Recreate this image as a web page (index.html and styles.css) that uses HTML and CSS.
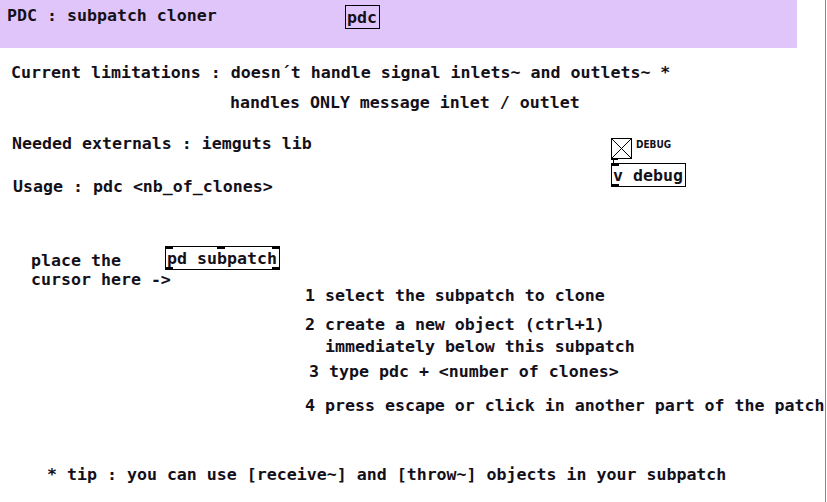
FILE: index.html
```html
<!DOCTYPE html>
<html>
<head>
<meta charset="utf-8">
<link rel="stylesheet" href="styles.css">
</head>
<body>
<div class="canvas">
  <div class="header"></div>
  <div class="c t-title">PDC : subpatch cloner</div>
  <div class="obj o-pdc">pdc</div>

  <div class="c t-lim">Current limitations : doesn´t handle signal inlets~ and outlets~ *</div>
  <div class="c t-lim2">handles ONLY message inlet / outlet</div>
  <div class="c t-need">Needed externals : iemguts lib</div>
  <div class="c t-usage">Usage : pdc &lt;nb_of_clones&gt;</div>

  <div class="toggle"><svg width="21" height="21" viewBox="0 0 21 21"><rect x="0.5" y="0.5" width="20" height="20" fill="#fff" stroke="#000"/><path d="M1 1L20 20M20 1L1 20" stroke="#000" stroke-width="1"/></svg><span class="tog-out"></span></div>
  <div class="tog-label">DEBUG</div>
  <div class="wire"></div>
  <div class="obj o-vdebug">v debug<span class="port p-tl"></span><span class="port p-bl"></span></div>

  <div class="c t-place">place the<br>cursor here -&gt;</div>
  <div class="obj o-sub">pd subpatch<span class="port p-tl"></span><span class="port p-tm"></span><span class="port p-tr"></span><span class="port p-bl"></span><span class="port p-br"></span></div>

  <div class="c t-s1">1 select the subpatch to clone</div>
  <div class="c t-s2">2 create a new object (ctrl+1)</div>
  <div class="c t-s2b">immediately below this subpatch</div>
  <div class="c t-s3">3 type pdc + &lt;number of clones&gt;</div>
  <div class="c t-s4">4 press escape or click in another part of the patch</div>

  <div class="c t-tip">* tip : you can use [receive~] and [throw~] objects in your subpatch</div>
</div>
</body>
</html>
```

FILE: styles.css
```css
html, body {
  margin: 0;
  padding: 0;
  background: #fff;
}
.canvas {
  position: relative;
  width: 825px;
  height: 502px;
  border-right: 1px solid #8a8a8a;
  background: #fff;
  overflow: hidden;
  font-family: "DejaVu Sans Mono", monospace;
  font-weight: bold;
  font-size: 16.6px;
  color: #14101a;
}
.header {
  position: absolute;
  left: 0;
  top: 0;
  width: 797px;
  height: 48px;
  background: #dfc5fa;
}
.c {
  position: absolute;
  line-height: 19px;
  white-space: pre;
}
.t-title { left: 7px; top: 6px; }
.t-lim { left: 11px; top: 63px; }
.t-lim2 { left: 230px; top: 93px; }
.t-need { left: 12px; top: 134px; }
.t-usage { left: 13px; top: 177px; }
.t-place { left: 31px; top: 251px; }
.t-s1 { left: 305px; top: 286px; }
.t-s2 { left: 305px; top: 315px; }
.t-s2b { left: 325px; top: 337px; }
.t-s3 { left: 309px; top: 362px; }
.t-s4 { left: 305px; top: 396px; }
.t-tip { left: 47px; top: 465px; }

.obj {
  position: absolute;
  border: 1px solid #000;
  line-height: 23px;
  height: 22px;
  padding: 0 2px 0 1px;
  white-space: pre;
  box-sizing: content-box;
}
.o-pdc { left: 345px; top: 5px; }
.o-sub { left: 165px; top: 246px; background: #fff; }
.o-vdebug { left: 611px; top: 163px; background: #fff; }
.port {
  position: absolute;
  width: 8px;
  height: 3px;
  background: #000;
}
.p-tl { left: -1px; top: -1px; }
.p-tm { left: 51px; top: -1px; }
.p-tr { right: -1px; top: -1px; }
.p-bl { left: -1px; bottom: -1px; }
.p-br { right: -1px; bottom: -1px; }

.toggle {
  position: absolute;
  left: 611px;
  top: 138px;
  width: 21px;
  height: 21px;
}
.toggle svg { display: block; }
.tog-out {
  position: absolute;
  left: 0;
  bottom: -1px;
  width: 7px;
  height: 2px;
  background: #000;
}
.tog-label {
  position: absolute;
  left: 636px;
  top: 139px;
  font-family: "DejaVu Sans Condensed", "DejaVu Sans", sans-serif;
  font-size: 10px;
  line-height: 12px;
  font-weight: bold;
}
.wire {
  position: absolute;
  left: 613px;
  top: 159px;
  width: 1px;
  height: 5px;
  background: #000;
}
```
